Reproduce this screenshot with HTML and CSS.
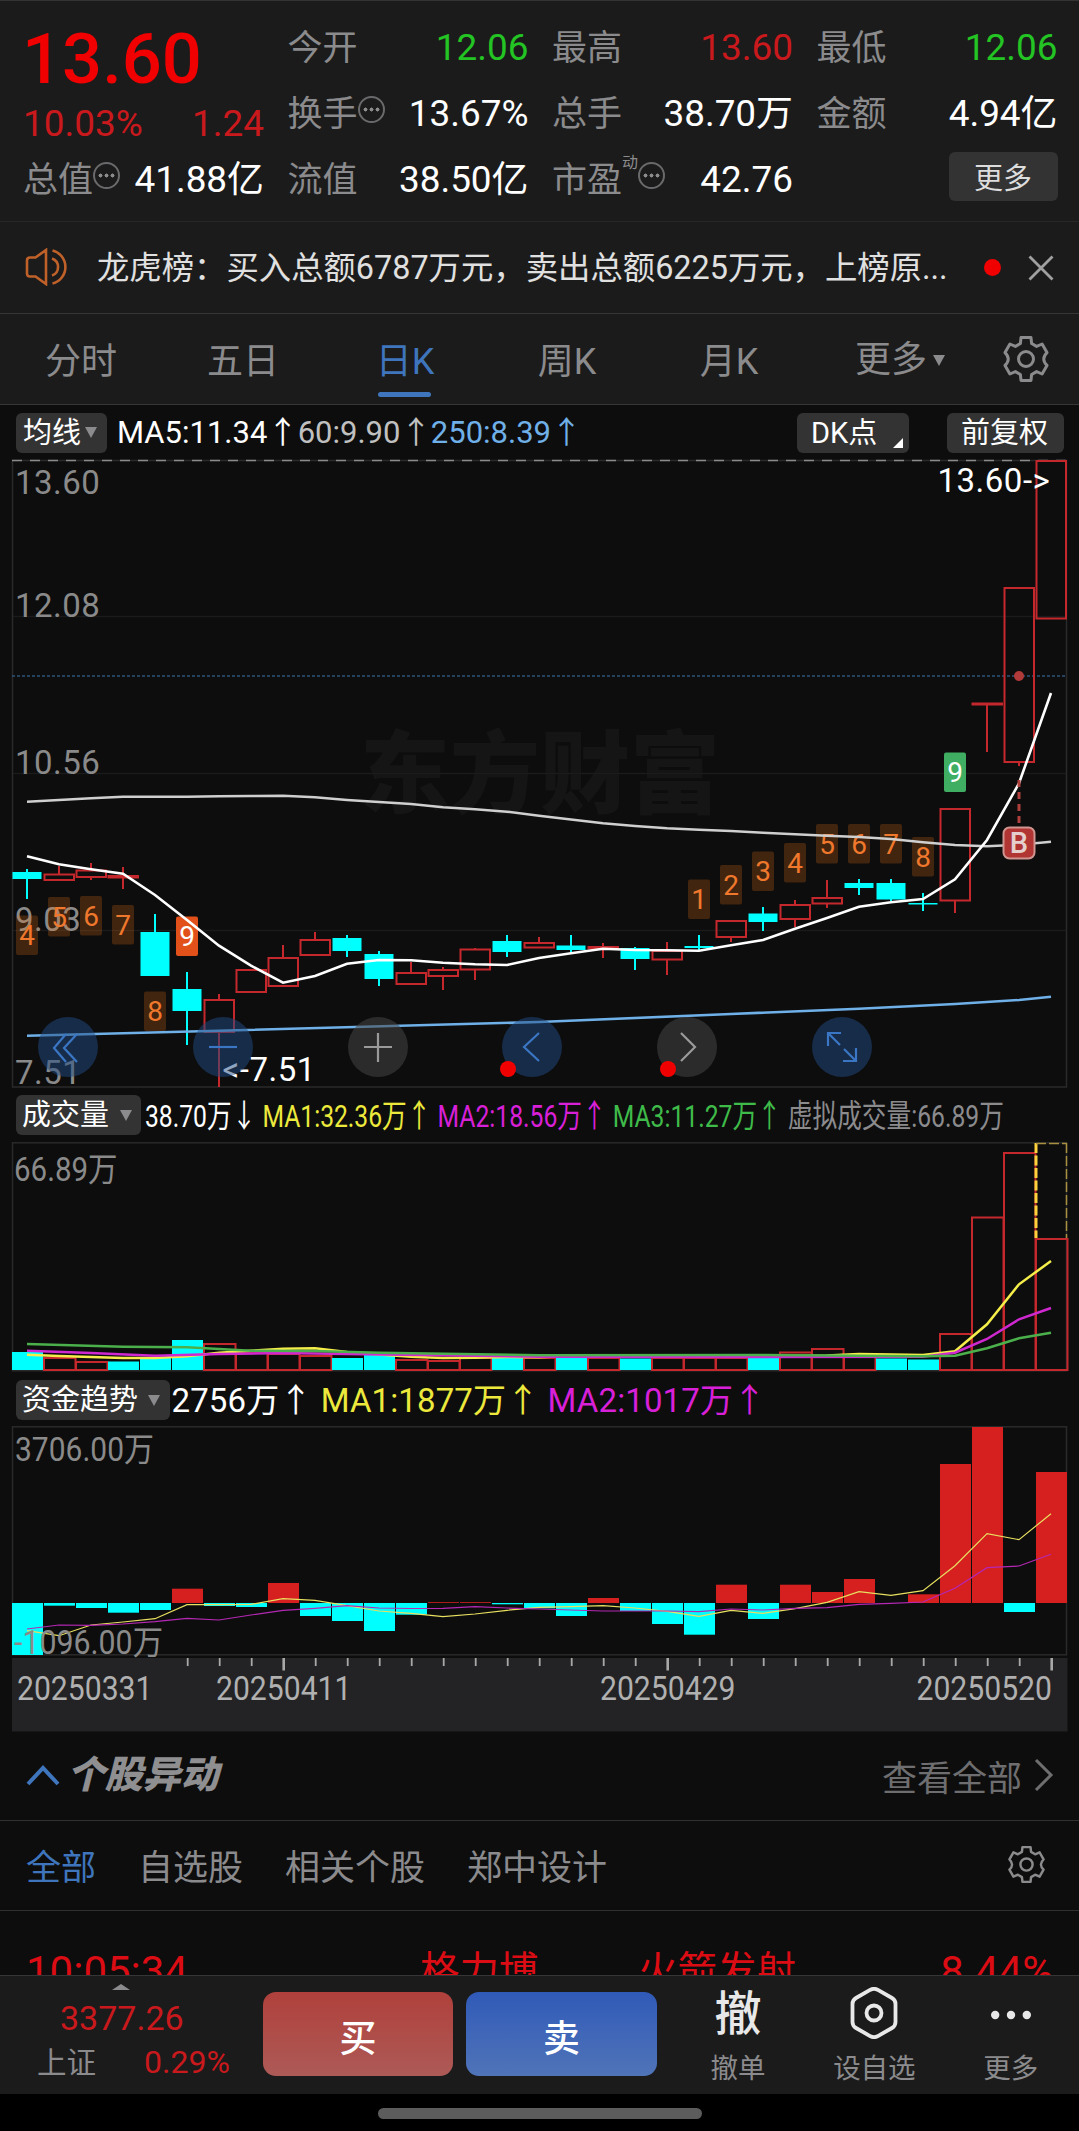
FILE: index.html
```html
<!DOCTYPE html>
<html lang="zh-CN">
<head>
    <meta charset="utf-8">
    <meta name="viewport" content="width=device-width, initial-scale=1">
    <title>日K</title>
    <link rel="stylesheet" href="styles.css">
</head>
<body>

<section class="quote">
    <div class="price">
        <div class="price-now">13.60</div>
        <div class="price-change"><span>10.03%</span><span>1.24</span></div>
    </div>
    <div class="cell"><label>今开</label><span class="green">12.06</span></div>
    <div class="cell"><label>最高</label><span class="red">13.60</span></div>
    <div class="cell"><label>最低</label><span class="green">12.06</span></div>
    <div class="cell"><label>换手</label><i class="tip"></i><span>13.67%</span></div>
    <div class="cell"><label>总手</label><span>38.70万</span></div>
    <div class="cell"><label>金额</label><span>4.94亿</span></div>
    <div class="cell"><label>总值</label><i class="tip"></i><span>41.88亿</span></div>
    <div class="cell"><label>流值</label><span>38.50亿</span></div>
    <div class="cell"><label>市盈</label><sup>动</sup><i class="tip"></i><span>42.76</span></div>
    <div class="cell"><button class="more-button">更多</button></div>
</section>

<section class="news">
    <svg class="speaker" viewBox="0 0 46 38">
        <path d="M2 12.500q0-3 3-3h5.500L21 2v34L10.500 28.500H5q-3 0-3-3z"/>
        <path d="M27 10.500a9 9 0 0 1 0 17M27.500 2.500a17 17 0 0 1 0 33"/>
    </svg>
    <p>龙虎榜：买入总额6787万元，卖出总额6225万元，上榜原...</p>
    <span class="news-dot"></span>
    <svg class="close" viewBox="0 0 26 26"><path d="M1.500 1.500l23 23M24.500 1.500l-23 23"/></svg>
</section>

<nav class="periods">
    <a>分时</a>
    <a>五日</a>
    <a class="active">日K</a>
    <a>周K</a>
    <a>月K</a>
    <a class="period-more">更多<i class="down"></i></a>
    <svg class="gear" viewBox="0 0 48 48">
        <path d="M18.400 8.500L19 2.600H29L29.600 8.500L34.600 11.400L40.100 9L45 17.600Q38.500 24 45 30.400L40.100 39L34.600 36.600L29.600 39.500L29 45.400H19L18.400 39.500L13.400 36.600L7.900 39L3 30.400Q9.500 24 3 17.600L7.900 9L13.400 11.400Z"/>
        <circle cx="24" cy="24" r="7.500"/>
    </svg>
</nav>

<div class="legend legend-ma">
    <button class="chip">均线<i class="down"></i></button>
    <div class="legend-text"><span>MA5:11.34↑</span><span class="ma60">60:9.90↑</span><span class="ma250">250:8.39↑</span></div>
    <button class="chip chip-dk">DK点<i class="corner"></i></button>
    <button class="chip chip-fq">前复权</button>
</div>

<div class="kline">
    <svg id="kline" viewBox="0 460 1079 628"></svg>
    <div class="tools">
        <button class="tool blue"><svg viewBox="0 0 60 60"><path d="M28 17L16 31l12 14M39 17L26 31l13 14"/></svg></button>
        <button class="tool blue"><svg viewBox="0 0 60 60"><path d="M16 30h28"/></svg></button>
        <button class="tool"><svg viewBox="0 0 60 60"><path d="M16 30h28M30 16v29"/></svg></button>
        <button class="tool blue"><svg viewBox="0 0 60 60"><path d="M37 16L22 30l15 14"/></svg><b></b></button>
        <button class="tool next"><svg viewBox="0 0 60 60"><path d="M24 16l14 14-14 14"/></svg><b></b></button>
        <button class="tool blue"><svg viewBox="0 0 60 60"><path d="M29 16H16v13M16 16l12 12M44 31v13H31M44 44L32 32"/></svg></button>
    </div>
</div>

<div class="legend legend-vol">
    <button class="chip">成交量<i class="down"></i></button>
    <div class="legend-text">38.70万↓ <span class="yellow">MA1:32.36万↑</span> <span class="magenta">MA2:18.56万↑</span> <span class="lime">MA3:11.27万↑</span> <span class="gray">虚拟成交量:66.89万</span></div>
</div>
<svg id="volume" class="panel" viewBox="0 1142 1079 230" height="230"></svg>

<div class="legend legend-fund">
    <button class="chip">资金趋势<i class="down"></i></button>
    <div class="legend-text">2756万↑ <span class="yellow">MA1:1877万↑</span> <span class="magenta">MA2:1017万↑</span></div>
</div>
<svg id="fund" class="panel" viewBox="0 1426 1079 306" height="306"></svg>

<section class="moves">
    <header>
        <svg class="up" viewBox="0 0 34 22"><path d="M2 20L17 4l15 16"/></svg>
        <h2>个股异动</h2>
        <a>查看全部</a>
        <svg class="right" viewBox="0 0 20 34"><path d="M2 2l15 15L2 32"/></svg>
    </header>
    <div class="filters">
        <a class="active">全部</a>
        <a>自选股</a>
        <a>相关个股</a>
        <a>郑中设计</a>
        <svg class="gear" viewBox="0 0 48 48">
            <path d="M18.400 8.500L19 2.600H29L29.600 8.500L34.600 11.400L40.100 9L45 17.600Q38.500 24 45 30.400L40.100 39L34.600 36.600L29.600 39.500L29 45.400H19L18.400 39.500L13.400 36.600L7.900 39L3 30.400Q9.500 24 3 17.600L7.900 9L13.400 11.400Z"/>
            <circle cx="24" cy="24" r="7.500"/>
        </svg>
    </div>
    <div class="move-row">
        <span>10:05:34</span>
        <span>格力博</span>
        <span>火箭发射</span>
        <span>8.44%</span>
    </div>
</section>

<footer class="trade">
    <div class="index">
        <i class="index-up"></i>
        <div class="index-value">3377.26</div>
        <div class="index-row"><span>上证</span><span class="index-pct">0.29%</span></div>
    </div>
    <button class="buy">买</button>
    <button class="sell">卖</button>
    <a class="action"><strong>撤</strong><span>撤单</span></a>
    <a class="action">
        <svg viewBox="0 0 48 52"><path d="M20.500 2.700q3.500-1.700 7 0L42 11q3.500 2 3.500 6v18q0 4-3.500 6l-14.500 8.300q-3.500 1.700-7 0L6 41q-3.500-2-3.500-6V17q0-4 3.500-6z"/><circle cx="24" cy="26" r="7.500"/></svg>
        <span>设自选</span>
    </a>
    <a class="action">
        <svg class="dots" viewBox="0 0 48 52"><circle cx="8.200" cy="28" r="4.200"/><circle cx="24" cy="28" r="4.200"/><circle cx="39.800" cy="28" r="4.200"/></svg>
        <span>更多</span>
    </a>
</footer>
<div class="home"><i></i></div>

<script>
const RED = '#c4282c';
const CYAN = '#00ffff';
const STEP = 32;
const cx = i => 27 + i * STEP;

// up/down, high, body top, body bottom, low
const candles = [
    ['d', 869, 872, 879, 899], ['u', 866, 874.5, 880, 880], ['u', 863, 870.5, 877, 880], ['u', 867, 876, 877.5, 889],
    ['d', 914, 932, 976, 976], ['d', 972, 989, 1011, 1045], ['u', 994, 1000, 1032, 1087], ['u', 970, 970, 992, 992],
    ['u', 945, 958, 986, 986], ['u', 932, 940, 955, 955], ['d', 935, 938, 951, 957], ['d', 951, 954, 979, 986],
    ['u', 962, 973, 984, 984], ['u', 967, 970, 976, 990], ['u', 948, 949.5, 969.5, 980], ['d', 935, 941, 952, 957],
    ['u', 937, 943, 947.5, 947.5], ['d', 935, 945.5, 950, 954], ['u', 943, 947, 948.5, 958], ['d', 947, 948, 959, 970],
    ['u', 942, 951, 959.5, 975], ['d', 935, 946, 948, 950], ['u', 921, 921, 937, 942], ['d', 907, 913.5, 922, 931],
    ['u', 900, 905, 919, 927], ['u', 880, 898, 903.5, 908], ['d', 879, 883, 888, 895], ['d', 879, 883, 899.5, 901],
    ['d', 893, 903, 904.5, 911], ['u', 808, 809, 900.5, 913], ['u', 704, 703.5, 704.5, 752], ['u', 588, 588, 762, 766],
    ['u', 461, 461, 618.5, 618.5]
];
const ma5 = [856.3, 864.3, 869.3, 873.7, 895, 920, 945.7, 965.7, 982.7, 976, 963.7, 960, 960.3, 962.7, 964.3, 965, 958, 953.3, 948.7, 950, 950.3, 950.7, 945.3, 940, 928.7, 918, 906.7, 902.3, 899, 879.3, 840, 783.3, 693];
const ma60 = [801.7, 800, 798.3, 796.7, 796.7, 796.7, 796.3, 796, 795.7, 797.3, 800, 802, 804, 807.3, 809.3, 811.7, 815.7, 819.5, 823.3, 826, 828.3, 829.7, 831, 832.7, 834.3, 835.7, 837, 839, 842.3, 845, 846.3, 844.7, 841.7];
const ma250 = [[0, 1035.7], [6, 1030.7], [16, 1022], [22, 1014], [26, 1008.7], [29, 1004], [31, 1000], [32, 996.7]];

// column, number, top, style
const marks = [
    [0, 4, 915.5, ''], [1, 5, 897, ''], [2, 6, 896, ''], [3, 7, 905, ''], [4, 8, 991.5, ''], [5, 9, 916.5, 'hot'],
    [21, 1, 879.5, ''], [22, 2, 865, ''], [23, 3, 851.5, ''], [24, 4, 843, ''], [25, 5, 824, ''], [26, 6, 824, ''],
    [27, 7, 824, ''], [28, 8, 837, ''], [29, 9, 752.5, 'ok']
];

const volumes = [
    ['d', 1352], ['u', 1358], ['u', 1362], ['d', 1361.5], ['d', 1358], ['d', 1340], ['u', 1344], ['u', 1353], ['u', 1354],
    ['u', 1356], ['d', 1358], ['d', 1355], ['u', 1360], ['u', 1361], ['u', 1358], ['d', 1358], ['u', 1358], ['d', 1357.5],
    ['u', 1358], ['d', 1358.5], ['u', 1358], ['u', 1358], ['u', 1358], ['d', 1358], ['u', 1352.5], ['u', 1349], ['u', 1355],
    ['d', 1358.5], ['d', 1359.5], ['u', 1334], ['u', 1217.5], ['u', 1153], ['u', 1239]
];
const volY = [1354.7, 1356, 1357, 1358, 1358, 1356.3, 1352.7, 1350.7, 1348.7, 1348.3, 1352, 1354.5, 1356.7, 1358, 1357.7, 1357, 1357.3, 1356, 1356, 1356, 1356, 1356, 1356, 1356, 1356, 1355.5, 1354, 1354.5, 1355, 1351.3, 1324.3, 1284.3, 1261];
const volM = [[0, 1350.7], [2, 1353], [4, 1355.7], [6, 1354], [8, 1353], [10, 1354], [16, 1356.7], [22, 1357], [28, 1356.7], [29, 1352.7], [30, 1339], [31, 1319.3], [32, 1308]];
const volG = [[0, 1344], [3, 1346.7], [5, 1347.3], [7, 1350.7], [9, 1351], [11, 1352.7], [16, 1355.3], [23, 1355], [28, 1356.3], [29, 1355.7], [30, 1348.3], [31, 1338.3], [32, 1332.7]];

const ZERO = 1603;
const funds = [1655, 1605.7, 1608, 1612.7, 1610, 1588.7, 1606, 1607, 1583, 1616, 1621, 1631, 1614.7, 1602.2, 1602.2, 1604.3, 1608.3, 1616, 1598, 1611, 1624, 1634.7, 1584.7, 1619, 1584.7, 1592, 1579, 1603, 1594.3, 1464, 1427, 1612, 1472];
const fundY = [1630.7, 1635.7, 1625, 1622, 1618.7, 1604.7, 1604.7, 1604.3, 1598.7, 1600.3, 1605.7, 1611, 1613.3, 1616.7, 1614, 1610.3, 1607.3, 1606.7, 1605.7, 1608, 1611.3, 1616.3, 1610.3, 1613.3, 1608.7, 1602.3, 1591.7, 1595.3, 1590.7, 1565.7, 1533.7, 1539.7, 1513.7];
const fundM = [1629, 1625, 1625.3, 1624, 1621.7, 1618.3, 1620, 1615, 1610.3, 1608.3, 1605.7, 1608, 1608.5, 1608.3, 1606.7, 1608, 1609, 1610, 1611, 1611, 1611, 1611.7, 1609, 1610, 1608.3, 1607.7, 1604.3, 1603.3, 1602, 1588.3, 1567.7, 1566, 1554.3];

function poly(list, color, width) {
    const pts = list.map((p, i) => Array.isArray(p) ? `${cx(p[0])},${p[1]}` : `${cx(i)},${p}`).join(' ');
    return `<polyline points="${pts}" fill="none" stroke="${color}" stroke-width="${width}"/>`;
}

function line(x1, y1, x2, y2, color, width, dash) {
    return `<line x1="${x1}" y1="${y1}" x2="${x2}" y2="${y2}" stroke="${color}" stroke-width="${width}" stroke-dasharray="${dash || 'none'}"/>`;
}

function text(x, y, value, cls, length) {
    const fit = length ? `textLength="${length}" lengthAdjust="spacingAndGlyphs"` : '';
    return `<text x="${x}" y="${y}" class="${cls}" ${fit}>${value}</text>`;
}

function drawKline() {
    let out = '<text x="360" y="806" class="watermark">东方财富</text>';
    [616.5, 773.5, 930.5].forEach(y => out += line(12, y, 1067, y, '#1b1b1b', 1.5));
    out += '<rect x="12.5" y="460.5" width="1054" height="626.5" fill="none" stroke="#2a2a2a" stroke-width="1.5"/>';
    out += line(12, 460.5, 1067, 460.5, '#8a8a8a', 1.3, '10 8');
    out += line(12, 676, 1067, 676, '#2d5478', 1.3, '3 2');

    candles.forEach(([dir, high, top, bottom, low], i) => {
        const x = cx(i);
        if (dir === 'd') {
            out += line(x, high, x, low, CYAN, 2);
            out += `<rect x="${x - 14.5}" y="${top}" width="29" height="${bottom - top}" fill="${CYAN}"/>`;
        } else {
            out += line(x, high, x, top, RED, 2) + line(x, bottom, x, low, RED, 2);
            out += `<rect x="${x - 14.5}" y="${top}" width="29.5" height="${bottom - top}" fill="none" stroke="${RED}" stroke-width="2"/>`;
        }
    });

    [['13.60', 493.5], ['12.08', 616.5], ['10.56', 774], ['9.03', 930.5], ['7.51', 1083.5]]
        .forEach(([v, y]) => out += text(15, y, v, 'axis'));

    marks.forEach(([i, n, top, cls]) => {
        out += `<rect x="${cx(i) - 11}" y="${top}" width="22" height="39.5" rx="2" class="mark ${cls}"/>`;
        out += text(cx(i), top + 29.5, n, 'mark-text ' + cls);
    });

    out += poly(ma60, '#cfcfcf', 2.4) + poly(ma250, '#6fb0e8', 2.6) + poly(ma5, '#ffffff', 2.6);
    out += line(1019, 780, 1019, 826, '#b0403c', 3, '7 5');
    out += '<circle cx="1019" cy="676" r="5" fill="#b03a3a"/>';
    out += '<rect x="1003.500" y="827.500" width="31" height="31" rx="6" fill="#b03533" stroke="#cf9590" stroke-width="2"/>';
    out += text(1019, 853, 'B', 'badge');
    out += text(937.5, 492, '13.60-&gt;', 'peak') + text(222.5, 1080.5, '&lt;-7.51', 'peak');
    document.getElementById('kline').innerHTML = out;
}

function drawVolume() {
    let out = '<rect x="12.5" y="1142.800" width="1054" height="228" fill="none" stroke="#2a2a2a" stroke-width="1.5"/>';
    volumes.forEach(([dir, top], i) => {
        const x = cx(i) - 15;
        if (dir === 'd') {
            out += `<rect x="${x}" y="${top}" width="31" height="${1370 - top}" fill="${CYAN}"/>`;
        } else {
            out += `<rect x="${x}" y="${top}" width="31.500" height="${1370 - top}" fill="none" stroke="${RED}" stroke-width="2"/>`;
        }
    });
    out += line(1036, 1143, 1036, 1238, '#ffd23c', 3, '10 2.500');
    out += line(1036, 1143.5, 1067, 1143.5, '#a89040', 1.5, '10 3') + line(1066.5, 1143, 1066.5, 1238, '#a89040', 1.5, '10 3');
    out += poly(volY, '#f5ee4a', 2.5) + poly(volM, '#d028d0', 2.5) + poly(volG, '#4bb04b', 2.5);
    out += text(14, 1180.500, '66.89万', 'axis fit', 103.5);
    document.getElementById('volume').innerHTML = out;
}

function drawFund() {
    let out = '<rect x="12.5" y="1426.800" width="1054" height="228" fill="none" stroke="#2a2a2a" stroke-width="1.500"/>';
    funds.forEach((y, i) => {
        const color = y > ZERO ? CYAN : '#d61f1f';
        out += `<rect x="${cx(i) - 15}" y="${Math.min(y, ZERO)}" width="31" height="${Math.abs(y - ZERO)}" fill="${color}"/>`;
    });
    out += poly(fundY, '#e8e060', 1.2) + poly(fundM, '#b428b4', 1.2);
    out += text(15, 1461, '3706.00万', 'axis fit', 139) + text(14, 1654, '-1096.00万', 'axis fit', 149);

    // date strip
    out += '<rect x="12" y="1658" width="1055.500" height="73.500" fill="#232325"/>';
    for (let i = 5; i < 33; i++) {
        const major = i === 8 || i === 20 || i === 32;
        out += line(cx(i) + .7, 1658, cx(i) + .7, major ? 1670.5 : 1666, '#a8a8a8', major ? 2.6 : 1.8);
    }
    [['20250331', 17], ['20250411', 216], ['20250429', 600], ['20250520', 916.5]]
        .forEach(([d, x]) => out += text(x, 1700, d, 'date', 135.5));
    document.getElementById('fund').innerHTML = out;
}

drawKline();
drawVolume();
drawFund();
</script>

</body>
</html>
```
FILE: styles.css
```css
* {
    padding: 0;
    margin: 0;
    box-sizing: border-box;
}

body {
    width: 1079px;
    height: 2131px;
    overflow: hidden;
    background-color: #0d0d0d;
    color: #fff;
    font-family: Roboto, 'Noto Sans CJK SC', sans-serif;
    display: flex;
    flex-direction: column;
}

body > * {
    flex-shrink: 0;
}

button {
    border: none;
    color: inherit;
    font-family: inherit;
}

svg {
    display: block;
    fill: none;
}

/* quote header */
.quote {
    height: 222px;
    padding: 13px 22px 0 23px;
    background-color: #1b1b1b;
    border-top: 1px solid #333;
    border-bottom: 1px solid #272727;
    display: grid;
    grid-template-columns: repeat(4, 241px);
    grid-auto-rows: 66px;
    column-gap: 23.5px;
}

.price {
    grid-row: span 2;
    padding-top: 6px;
}

.price-now {
    margin-left: -1px;
    font-size: 70.5px;
    font-weight: 500;
    line-height: 78px;
    color: #f00000;
}

.price-change {
    display: flex;
    justify-content: space-between;
    margin-top: 1px;
    font-size: 36.9px;
    line-height: 50px;
    color: #c9191d;
}

.cell {
    display: flex;
    align-items: center;
    font-size: 36.9px;
    line-height: 66px;
}

.cell label {
    margin-top: 3px;
    font-size: 35px;
    color: #8b8b8d;
}

.cell span {
    margin: 1px 0 0 auto;
}

.cell sup {
    align-self: flex-start;
    margin-top: 7px;
    font-size: 16px;
    line-height: 20px;
    color: #8b8b8d;
}

.tip {
    width: 27px;
    height: 27px;
    margin-top: -8px;
    border: 2px solid #6a6a6c;
    border-radius: 50%;
    background-image: radial-gradient(circle, #8b8b8d 1.8px, transparent 2.2px), radial-gradient(circle, #8b8b8d 1.8px, transparent 2.2px), radial-gradient(circle, #8b8b8d 1.8px, transparent 2.2px);
    background-size: 5px 5px;
    background-position: 3px 9px, 9px 9px, 15px 9px;
    background-repeat: no-repeat;
}

.red {
    color: #c9191d;
}

.green {
    color: #23c423;
}

.more-button {
    width: 109px;
    height: 49px;
    margin: -5px 0 0 auto;
    padding-bottom: 1px;
    border-radius: 6px;
    background-color: #333;
    color: #ddd;
    font-size: 29px;
}

/* news line */
.news {
    height: 92px;
    padding: 0 25px;
    background-color: #1b1b1b;
    border-bottom: 1px solid #363636;
    display: flex;
    align-items: center;
}

.speaker {
    width: 46px;
    height: 38px;
    margin-top: -2px;
    stroke: #c0612a;
    stroke-width: 2.6;
}

.news p {
    width: 850px;
    margin-left: 26px;
    font-size: 32.36px;
    line-height: 60px;
    color: #e0e0e0;
    white-space: nowrap;
}

.news-dot {
    width: 17px;
    height: 17px;
    margin-left: 37px;
    border-radius: 50%;
    background-color: #f00000;
}

.close {
    width: 26px;
    height: 26px;
    margin-left: auto;
    stroke: #a0a0a0;
    stroke-width: 2.8;
}

/* period tabs */
.periods {
    height: 91px;
    background-color: #1b1b1b;
    border-bottom: 1px solid #363636;
    display: flex;
    align-items: center;
    font-size: 36px;
    line-height: 90px;
    color: #8b8b8d;
}

.periods a {
    width: 162px;
    height: 90px;
    padding-top: 2.5px;
    text-align: center;
    position: relative;
}

.periods .active {
    color: #3f75bc;
}

.periods .active::after {
    content: '';
    position: absolute;
    left: 54px;
    bottom: 7px;
    width: 53px;
    height: 5px;
    border-radius: 3px;
    background-color: #3f75bc;
}

.periods .period-more {
    width: 180px;
    display: flex;
    align-items: center;
    justify-content: center;
    gap: 6px;
}

.down {
    border: 6.5px solid transparent;
    border-top: 11px solid #8b8b8d;
    border-bottom: 0;
}

.gear {
    width: 48px;
    height: 48px;
    margin-left: 12px;
    stroke: #8b8b8d;
    stroke-width: 3;
    stroke-linejoin: round;
}

/* chart legends */
.legend {
    display: flex;
    align-items: center;
    padding-left: 16px;
}

.legend-text {
    white-space: pre;
}

.chip {
    height: 40px;
    padding-left: 6px;
    border-radius: 6px;
    background-color: #333;
    font-size: 29px;
    line-height: 40px;
    white-space: nowrap;
    display: flex;
    flex-shrink: 0;
    align-items: center;
    position: relative;
}

.legend-ma {
    height: 55px;
    font-size: 31px;
    line-height: 50px;
}

.legend-ma .chip {
    width: 91px;
    padding-left: 7px;
    gap: 4px;
}

.legend-ma .legend-text {
    width: 680px;
    margin-left: 10px;
}

.legend-ma .legend-text span {
    margin-right: -.7px;
}

.legend-ma .chip-dk {
    width: 112px;
    padding-left: 14px;
}

.legend-ma .chip-fq {
    width: 117px;
    margin-left: 38px;
    padding-left: 14px;
}

.corner {
    position: absolute;
    right: 6px;
    bottom: 5px;
    border-left: 10px solid transparent;
    border-bottom: 10px solid #fff;
}

.legend-vol {
    height: 54px;
    font-size: 32px;
}

.legend-vol .chip {
    width: 125px;
    gap: 11px;
}

.legend-vol .legend-text {
    margin: -4px 0 0 4px;
    transform: scaleX(.771);
    transform-origin: left;
}

.legend-fund {
    height: 54px;
    padding-top: 2px;
    font-size: 33px;
}

.legend-fund .chip {
    width: 154px;
    gap: 10px;
}

.legend-fund .legend-text {
    margin: -5px 0 0 1.5px;
    letter-spacing: .12px;
}

.ma60 {
    color: #c0c0c0;
}

.ma250 {
    color: #70b0e8;
}

.yellow {
    color: #ece93c;
}

.magenta {
    color: #d820d8;
}

.lime {
    color: #3fbb4a;
}

.gray {
    color: #8b8b8d;
}

/* charts */
.kline {
    height: 628px;
    position: relative;
}

#kline,
.panel {
    width: 1079px;
    overflow: visible;
}

#kline {
    height: 628px;
}

.axis {
    font-size: 33px;
    letter-spacing: .5px;
    fill: #8a8a8a;
}

.axis.fit {
    letter-spacing: 0;
}

.date {
    font-size: 33px;
    fill: #b0b0b0;
}

.peak {
    font-size: 33px;
    letter-spacing: .5px;
    fill: #fff;
}

.watermark {
    font-size: 90px;
    font-weight: 900;
    fill: #151515;
}

.mark {
    fill: #ff7a14;
    fill-opacity: .22;
}

.mark.hot {
    fill: #e25119;
    fill-opacity: 1;
}

.mark.ok {
    fill: #3fae62;
    fill-opacity: 1;
}

.mark-text {
    font-size: 28px;
    text-anchor: middle;
    fill: #f0782d;
}

.mark-text.hot,
.mark-text.ok {
    fill: #fff;
}

.badge {
    font-size: 29px;
    font-weight: 500;
    text-anchor: middle;
    fill: #e4cfcc;
}

.tools {
    position: absolute;
    left: 38px;
    top: 557px;
    display: flex;
    gap: 94.8px;
}

.tool {
    width: 60px;
    height: 60px;
    border-radius: 50%;
    background-color: rgba(70, 70, 70, .55);
    position: relative;
}

.tool svg {
    width: 60px;
    height: 60px;
    stroke: #9a9a9a;
    stroke-width: 2.2;
}

.tool.blue {
    background-color: rgba(34, 76, 132, .5);
}

.tool.blue svg {
    stroke: #3a76c4;
}

.tool b {
    position: absolute;
    left: -2.5px;
    bottom: 0;
    width: 16px;
    height: 16px;
    border-radius: 50%;
    background-color: #f00000;
}

.tool.next b {
    left: 3px;
}

/* stock moves list */
.moves header {
    height: 89px;
    padding: 0 25px 0 26px;
    border-bottom: 1px solid #303030;
    display: flex;
    align-items: center;
}

.up {
    width: 34px;
    height: 22px;
    margin-top: -2px;
    stroke: #3f75bc;
    stroke-width: 4;
}

.moves h2 {
    margin: -2px 0 0 7px;
    font-size: 38px;
    font-weight: 900;
    font-style: italic;
    line-height: 60px;
    letter-spacing: -.2px;
    color: #8f8f91;
}

.moves header a {
    margin: -2px 0 0 auto;
    font-size: 35px;
    color: #6e6e70;
}

.right {
    width: 20px;
    height: 34px;
    margin: -2px 0 0 12px;
    stroke: #6e6e70;
    stroke-width: 3;
}

.filters {
    height: 90px;
    padding-left: 26px;
    border-bottom: 1px solid #303030;
    display: flex;
    align-items: center;
    gap: 42px;
    font-size: 35px;
    line-height: 84px;
    color: #8b8b8d;
}

.filters a {
    padding-top: 6px;
}

.filters .active {
    color: #3f75bc;
}

.filters .gear {
    width: 39px;
    height: 39px;
    margin: -2px 33px 0 auto;
}

.move-row {
    height: 64px;
    padding: 36px 26px 0;
    overflow: hidden;
    display: grid;
    grid-template-columns: 394px 218px 1fr auto;
    font-size: 42px;
    line-height: 50px;
    color: #dc0c14;
}

.move-row span:nth-child(2),
.move-row span:nth-child(3) {
    font-size: 39.5px;
}

/* bottom bar */
.trade {
    height: 119px;
    background-color: #1b1b1b;
    border-top: 1px solid #363636;
    display: flex;
}

.index {
    width: 263px;
    padding: 8px 33px 0 37px;
    display: flex;
    flex-direction: column;
}

.index-up {
    margin-left: 75px;
    width: 18px;
    border: 9px solid transparent;
    border-top: 0;
    border-bottom: 6px solid #8b8b8d;
}

.index-value {
    margin: 6px 0 2px 23px;
    font-size: 34px;
    line-height: 44px;
    color: #c9191d;
}

.index-row {
    display: flex;
    justify-content: space-between;
    font-size: 29.5px;
    line-height: 42px;
    color: #8b8b8d;
}

.index-pct {
    margin-top: -1px;
    font-size: 32px;
    color: #c9191d;
}

.buy,
.sell {
    width: 190.5px;
    height: 84px;
    margin: 16px 13px 0 0;
    border-radius: 13px;
    font-size: 37px;
    font-weight: 500;
    padding-top: 3px;
}

.buy {
    background: linear-gradient(#b0403b, #ad5a57);
}

.sell {
    background: linear-gradient(#305ab8, #5074b8);
}

.action {
    width: 136.5px;
    padding-top: 11px;
    display: flex;
    flex-direction: column;
    align-items: center;
    font-size: 27.5px;
    line-height: 40px;
    color: #8b8b8d;
}

.action strong {
    height: 52px;
    font-size: 47px;
    font-weight: 500;
    line-height: 52px;
    padding-top: 1px;
    color: #e8e8e8;
}

.action svg {
    width: 48px;
    height: 52px;
    stroke: #e8e8e8;
    stroke-width: 3.8;
}

.action .dots {
    fill: #e8e8e8;
    stroke: none;
}

.action span {
    margin-top: 10px;
}

.home {
    height: 38px;
    padding-top: 14px;
    background-color: #000;
}

.home i {
    display: block;
    width: 324px;
    height: 11px;
    margin: 0 auto;
    border-radius: 6px;
    background-color: #5c5c5c;
}
```
